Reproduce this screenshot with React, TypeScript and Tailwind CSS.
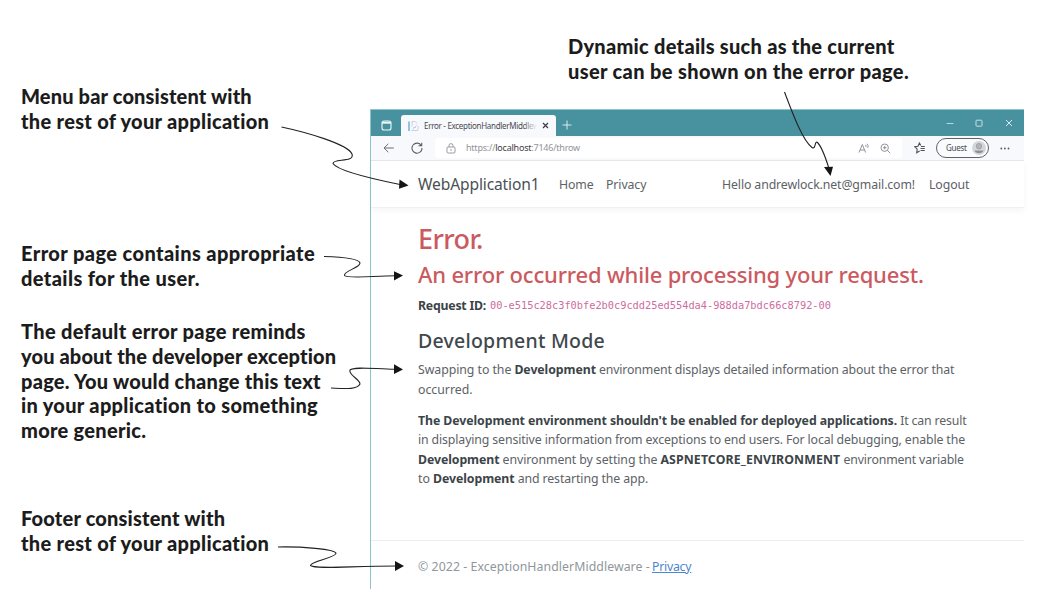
import React from 'react';

function TabStrip() {
  return (
    <div className="flex h-[26px] shrink-0 items-end bg-[#48929f] text-[#d7eaee]">
      <svg className="mb-[5px] ml-[10px] h-[11px] w-[11px] shrink-0" viewBox="0 0 11 11" fill="none" stroke="#eef7f8" strokeWidth="1.1">
        <rect x="1" y="1" width="9" height="9" rx="2" />
        <path d="M1 2.7h9" strokeWidth="2" />
      </svg>
      <div className="ml-[9px] flex h-[21px] w-[155px] shrink-0 items-center rounded-t-[3px] bg-[#f7f9fc]">
        <svg className="ml-[7px] h-[12px] w-[12px] shrink-0" viewBox="0 0 12 12" fill="none">
          <path d="M1 1.500v9.500" stroke="#6fa6dc" strokeWidth="1.4" />
          <path d="M4 1.500h3.200l2 2M4 1.500v5M4.500 9.800l4.500-5M5 7.500h3M3.500 10.500h6.500M10 6v4" stroke="#c3cddb" strokeWidth="0.9" />
        </svg>
        <div className="relative ml-[4px] w-[113px] overflow-hidden whitespace-nowrap text-[8px] leading-[12px] tracking-[-0.3px] text-[#4a4a4e]">
          Error - ExceptionHandlerMiddlew
          <div className="absolute top-0 right-0 h-full w-[14px] bg-gradient-to-r from-transparent to-[#f7f9fc]" />
        </div>
        <svg className="ml-[5px] h-[7px] w-[7px] shrink-0" viewBox="0 0 7 7" stroke="#3c3c40" strokeWidth="1.2">
          <path d="M1 1l5 5M6 1l-5 5" />
        </svg>
      </div>
      <svg className="mb-[6px] ml-[6px] h-[10px] w-[10px] shrink-0" viewBox="0 0 10 10" stroke="#d7eaee" strokeWidth="1">
        <path d="M5 .5v9M.5 5h9" />
      </svg>
      <div className="mr-[11px] mb-[9px] ml-auto flex items-center">
        <svg className="h-[8px] w-[8px]" viewBox="0 0 8 8" stroke="#b9d8dd" strokeWidth="1">
          <path d="M.5 4.500h7" />
        </svg>
        <svg className="ml-[21px] h-[8px] w-[8px]" viewBox="0 0 8 8" fill="none" stroke="#c6dfe3" strokeWidth="1">
          <rect x="1" y="1.200" width="6" height="6" rx=".8" />
        </svg>
        <svg className="ml-[22px] h-[8px] w-[8px]" viewBox="0 0 8 8" stroke="#d7eaee" strokeWidth="1">
          <path d="M1 1l6 6M7 1l-6 6" />
        </svg>
      </div>
    </div>
  );
}

function Toolbar() {
  return (
    <div className="flex h-[25px] shrink-0 items-center border-b border-[#e4e7eb] bg-[#f7f9fc]">
      <svg className="ml-[12px] h-[10px] w-[12px] shrink-0" viewBox="0 0 12 10" fill="none" stroke="#6d6f73" strokeWidth="1">
        <path d="M10.800 5H1.200M5.300 .8L1 5l4.300 4.200" />
      </svg>
      <svg className="ml-[16px] h-[12px] w-[12px] shrink-0" viewBox="0 0 12 12" fill="none" stroke="#5c5e62" strokeWidth="1.100">
        <path d="M10.300 3.600A5 5 0 1 0 11 6M10.700 .7v3.100H7.500" />
      </svg>
      <div className="ml-[12px] flex h-[20px] w-[467px] shrink-0 items-center rounded-[3px] bg-white">
        <svg className="ml-[11px] h-[11px] w-[10px] shrink-0" viewBox="0 0 10 11" fill="none" stroke="#909296" strokeWidth="0.900">
          <rect x="1" y="4" width="8" height="6" rx="1" />
          <path d="M3 4V2.600a2 2 0 0 1 4 0V4" />
          <circle cx="5" cy="7" r=".4" />
        </svg>
        <div className="ml-[10px] text-[9px] leading-[14px] tracking-[-0.22px] whitespace-nowrap text-[#929498]">
          https://<span className="text-[#3f4043]">localhost</span>:7146/throw
        </div>
        <svg className="ml-auto h-[11px] w-[12px] shrink-0" viewBox="0 0 12 11" fill="none" stroke="#85878b" strokeWidth="0.900">
          <path d="M1 9.500L4.300 1.500l3.300 8M2.200 7h4.300M7.500 1.800q.9.900.4 2.200M9 .8q1.900 1.700.8 4" />
        </svg>
        <svg className="mr-[11px] ml-[10px] h-[11px] w-[11px] shrink-0" viewBox="0 0 11 11" fill="none" stroke="#85878b" strokeWidth="0.900">
          <circle cx="4.700" cy="4.700" r="3.700" />
          <path d="M7.500 7.500l2.700 2.700M4.700 2.900v3.600M2.900 4.700h3.600" />
        </svg>
      </div>
      <svg className="ml-[12px] h-[12px] w-[12px] shrink-0" viewBox="0 0 12 12" fill="none" stroke="#515357" strokeWidth="1.100">
        <path d="M6.800 3.500L5.400 1 4 4.200 .8 4.700l2.400 2.400L2.700 10.700l3-1.700M7 4.500h3.800M6.500 6.500h4.300M6.500 8.500h4.300" />
      </svg>
      <div className="ml-[10px] flex h-[20px] w-[53px] shrink-0 items-center rounded-full border border-[#606266] bg-[#fafbfd]">
        <span className="ml-[9px] text-[8px] leading-[12px] tracking-[-0.3px] text-[#47494d]">Guest</span>
        <svg className="ml-auto mr-[2px] h-[14px] w-[14px]" viewBox="0 0 14 14">
          <circle cx="7" cy="7" r="7" fill="#d4d6d9" />
          <circle cx="7" cy="5.200" r="2.700" fill="#b4b6b9" stroke="#96989b" strokeWidth=".8" />
          <path d="M2.500 9.500h9a4.800 4.200 0 0 1-9 0" fill="#8d8f92" />
        </svg>
      </div>
      <svg className="ml-[11px] h-[3px] w-[10px]" viewBox="0 0 10 3" fill="#55575b">
        <circle cx="1.300" cy="1.500" r=".9" />
        <circle cx="4.900" cy="1.500" r=".9" />
        <circle cx="8.500" cy="1.500" r=".9" />
      </svg>
    </div>
  );
}

function NavBar() {
  return (
    <nav className="flex h-[47px] shrink-0 items-center border-b border-[#eef0f5] bg-white pt-[2px] pl-[47px] text-[12.3px] text-[#5c6266] shadow-[0_3px_6px_rgba(60,80,120,0.05)]">
      <span className="w-[141px] text-[15.6px] tracking-[-0.14px] text-[#4b5054]">WebApplication1</span>
      <span className="w-[47px] tracking-[-0.1px]">Home</span>
      <span className="w-[116px] tracking-[-0.1px]">Privacy</span>
      <span className="w-[207px] tracking-[-0.11px]">Hello andrewlock.net@gmail.com!</span>
      <span className="tracking-[-0.1px]">Logout</span>
    </nav>
  );
}

function ErrorBody() {
  return (
    <main className="flex flex-1 flex-col pt-[14px] pl-[47px] text-[12.3px] leading-[19.4px] text-[#5c6266]">
      <h1 className="text-[27px] leading-[34px] font-medium tracking-[-0.6px] text-[#cb5a60]">Error.</h1>
      <h2 className="mt-[4.5px] text-[22px] leading-[27px] font-medium tracking-[-0.18px] text-[#cb5a60]">
        An error occurred while processing your request.
      </h2>
      <p className="mt-[8.500px] flex">
        <strong className="w-[72px] tracking-[-0.22px] text-[#3b4448]">Request ID:</strong>
        <code className="font-['DejaVu_Sans_Mono',monospace] text-[10.3px] text-[#cd6c9e]">
          00-e515c28c3f0bfe2b0c9cdd25ed554da4-988da7bdc66c8792-00
        </code>
      </p>
      <h3 className="mt-[13.500px] text-[19.5px] leading-[24px] font-medium tracking-[0.23px] text-[#3f484c]">Development Mode</h3>
      <div className="mt-[7px]">
        <p>
          <span className="tracking-[-0.05px]">Swapping to the </span>
          <strong className="tracking-[-0.07px] text-[#3b4448]">Development</strong>
          <span className="tracking-[-0.14px]"> environment displays detailed information about the error that</span>
        </p>
        <p>occurred.</p>
      </div>
      <div className="mt-[12px]">
        <p>
          <strong className="tracking-[-0.07px] text-[#3b4448]">
            The Development environment shouldn't be enabled for deployed applications.
          </strong>
          <span className="tracking-[-0.15px]"> It can result</span>
        </p>
        <p className="tracking-[-0.12px]">
          in displaying sensitive information from exceptions to end users. For local debugging, enable the
        </p>
        <p>
          <strong className="tracking-[-0.07px] text-[#3b4448]">Development</strong>
          <span className="tracking-[-0.07px]"> environment by setting the </span>
          <strong className="tracking-[0.13px] text-[#3b4448]">ASPNETCORE_ENVIRONMENT</strong>
          <span className="tracking-[-0.15px]"> environment variable</span>
        </p>
        <p>
          to <strong className="tracking-[-0.07px] text-[#3b4448]">Development</strong>
          <span className="tracking-[-0.1px]"> and restarting the app.</span>
        </p>
      </div>
    </main>
  );
}

function BrowserWindow() {
  return (
    <section className="mt-[26px] flex h-[480px] w-[654px] flex-col border-t border-l border-[#8cc5cd] bg-white font-['Noto_Sans',sans-serif] whitespace-nowrap">
      <TabStrip />
      <Toolbar />
      <NavBar />
      <ErrorBody />
      <footer className="flex h-[49px] shrink-0 items-center border-t border-[#eceef6] pt-[4px] pl-[47px] text-[12.3px] text-[#90969c]">
        <span className="w-[234px] tracking-[0.07px]">© 2022 - ExceptionHandlerMiddleware -</span>
        <a className="tracking-[-0.25px] text-[#4c86cf] underline">Privacy</a>
      </footer>
    </section>
  );
}

function Callouts() {
  return (
    <svg className="pointer-events-none absolute inset-0 h-[598px] w-[1052px]" viewBox="0 0 1052 598" fill="none" stroke="#222" strokeWidth="1.100">
      <path d="M281.500 127C305 132 348 144 352 154C355 163 333 158 333 163.500C337 170 368 178 400 184.500" />
      <path d="M324 256.500C342 257 359 259 360 263C360 268 343 271 344.500 275.500C347 279 375 275.800 395 275.800" />
      <path d="M331 388C344 388.600 357 390 360 384C360 379 348 375 350 370C354 366 375 369 395 369.200" />
      <path d="M278 547C300 546.500 336 549 336 553.500C335 558 311 561 310.500 565.500C316 569.500 350 566 397 566" />
      <path d="M784.500 92C791 109 802 140 812 147.500C816 150 814.500 140 817.500 142.500C821 146 825 156 828.500 167" />
      <g fill="#151515" stroke="none">
        <path d="M399.500 179.500L408.500 185.500L399 188.800Z" />
        <path d="M394 271.200L403 275.500L394 280.500Z" />
        <path d="M394 364.300L403 369.500L394 374Z" />
        <path d="M395 561L404 566L395 571Z" />
        <path d="M824 167L833 166.800L830.500 176Z" />
      </g>
    </svg>
  );
}

export default function App() {
  return (
    <div className="relative flex h-[598px] w-[1052px] overflow-hidden bg-white">
      <aside className="flex w-[370px] shrink-0 flex-col pt-[84px] pl-[21px] font-['Lato',sans-serif] text-[20px] leading-[24.6px] font-black whitespace-nowrap text-[#1c1c1c]">
        <div>
          <p className="tracking-[0.15px]">Menu bar consistent with</p>
          <p className="tracking-[0.3px]">the rest of your application</p>
        </div>
        <div className="mt-[108px]">
          <p className="tracking-[0.4px]">Error page contains appropriate</p>
          <p className="tracking-[0.38px]">details for the user.</p>
        </div>
        <div className="mt-[29px]">
          <p className="tracking-[0.32px]">The default error page reminds</p>
          <p className="tracking-[0.14px]">you about the developer exception</p>
          <p className="tracking-[0.24px]">page. You would change this text</p>
          <p className="tracking-[0.31px]">in your application to something</p>
          <p className="tracking-[0.28px]">more generic.</p>
        </div>
        <div className="mt-[64px]">
          <p className="tracking-[0.18px]">Footer consistent with</p>
          <p className="tracking-[0.3px]">the rest of your application</p>
        </div>
      </aside>
      <div className="flex flex-col">
        <div className="pt-[34px] pl-[198px] font-['Lato',sans-serif] text-[20px] leading-[24.6px] font-black whitespace-nowrap text-[#1c1c1c]">
          <p className="tracking-[0.27px]">Dynamic details such as the current</p>
          <p className="tracking-[0.36px]">user can be shown on the error page.</p>
        </div>
        <BrowserWindow />
      </div>
      <Callouts />
    </div>
  );
}
